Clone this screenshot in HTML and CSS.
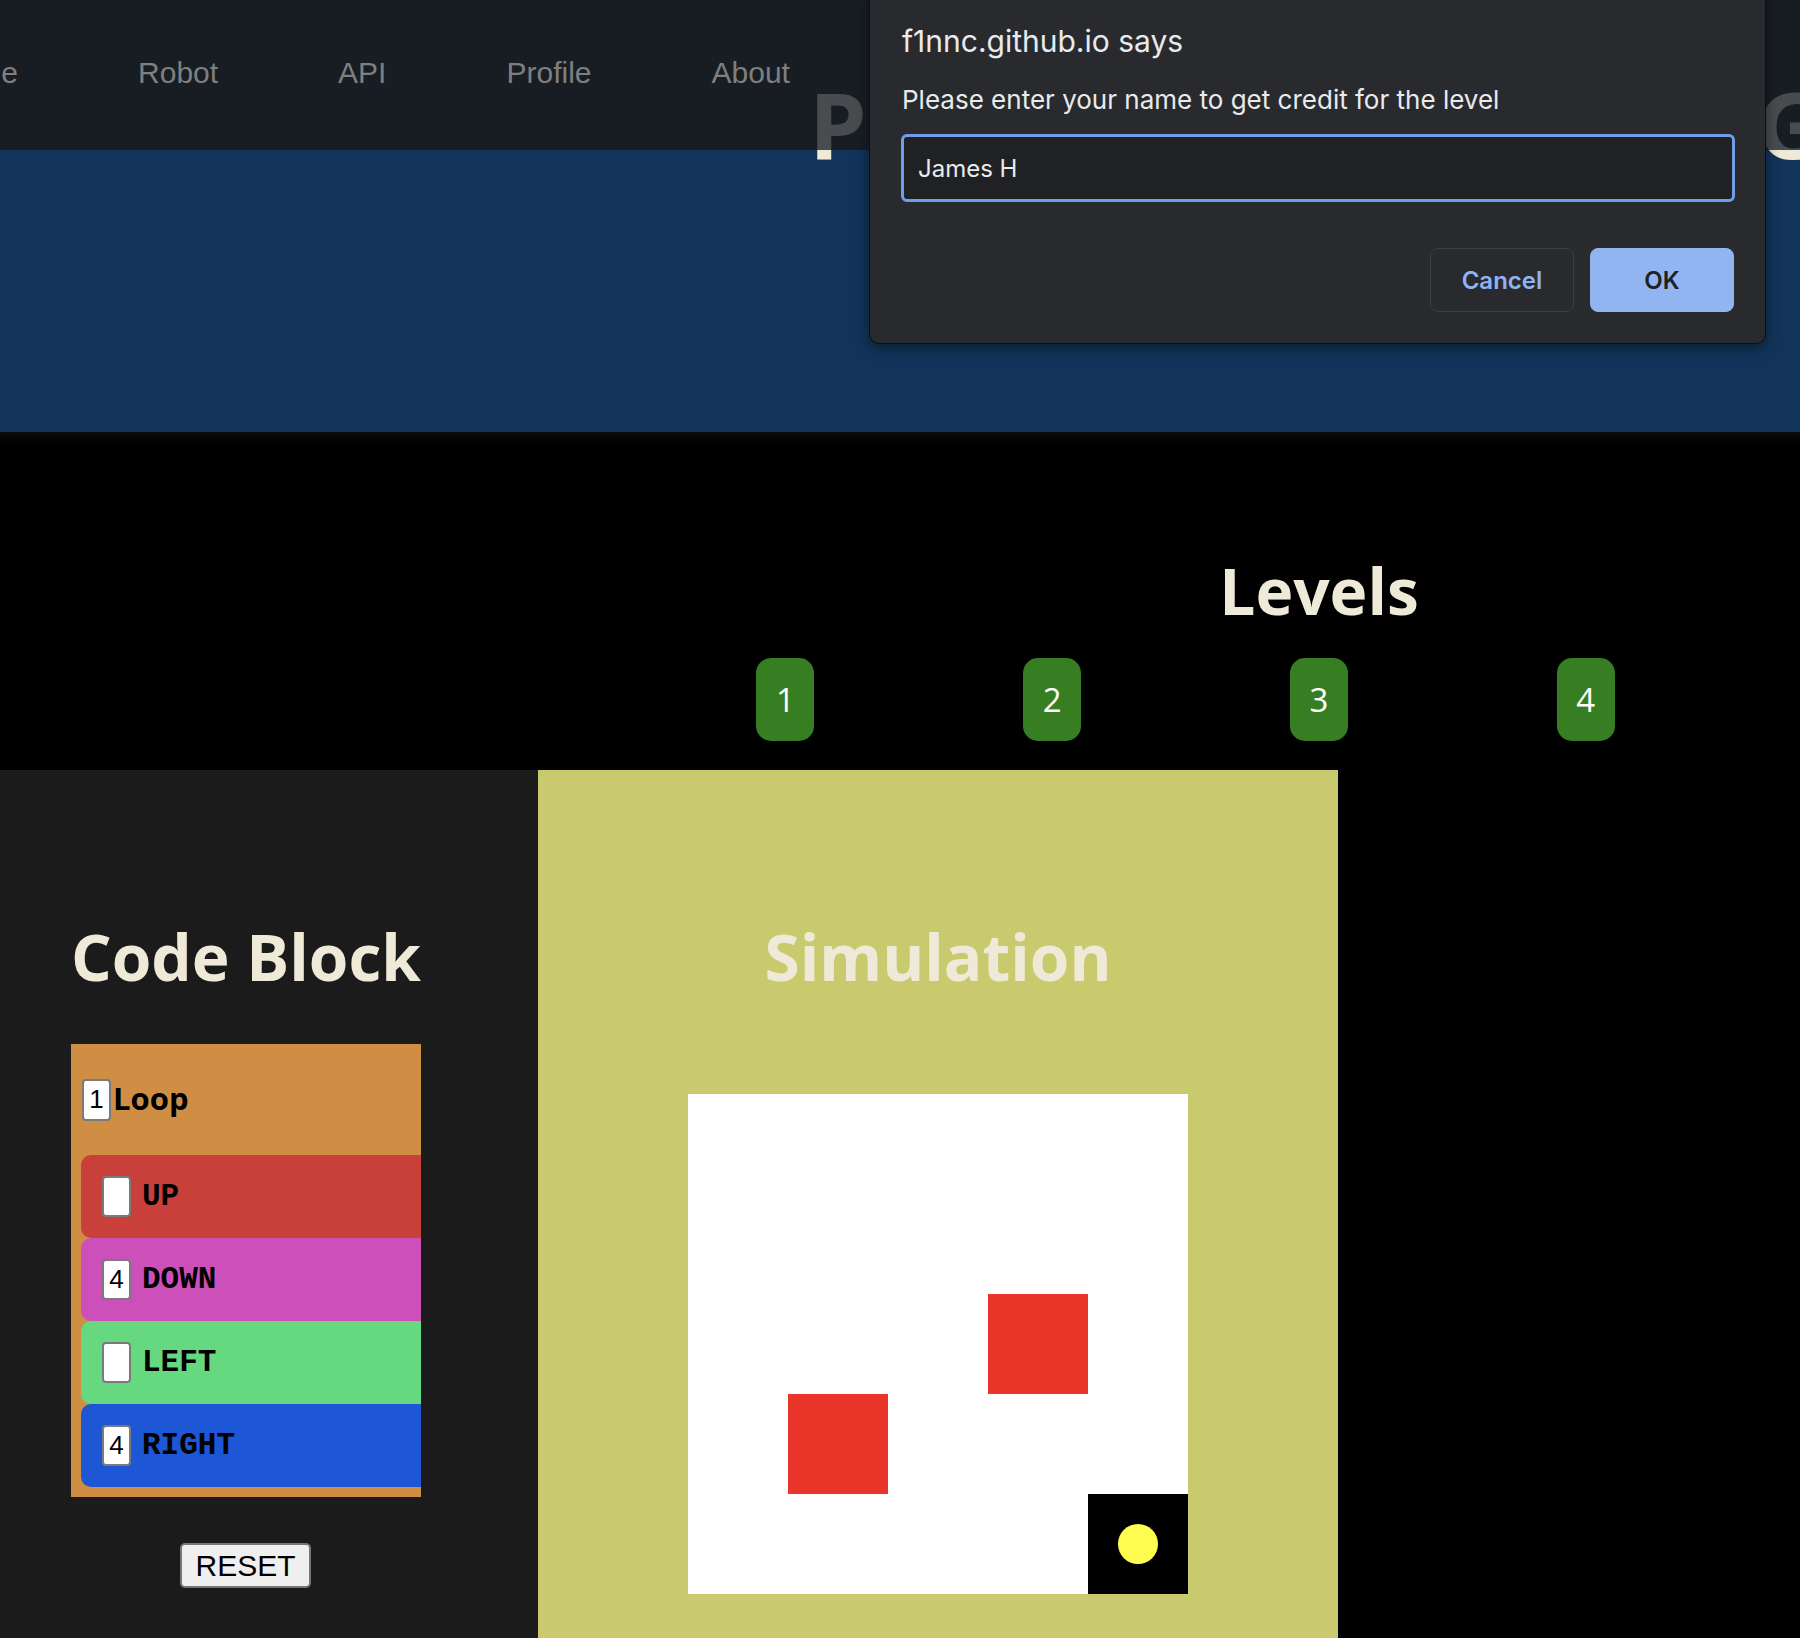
FILE: index.html
```html
<!DOCTYPE html>
<html lang="en">
<head>
<meta charset="utf-8">
<title>Programming Robot Game</title>
<link rel="stylesheet" href="styles.css">
</head>
<body>
<header class="site-header">
  <nav class="topnav">
    <ul class="nav-list">
      <li><a href="#">Home</a></li>
      <li><a href="#">Robot</a></li>
      <li><a href="#">API</a></li>
      <li><a href="#">Profile</a></li>
      <li><a href="#">About</a></li>
    </ul>
  </nav>
  <h1 class="site-title">Programming Robot Game</h1>
  <div class="hero"></div>
</header>

<section class="levels">
  <h2 class="levels-title">Levels</h2>
  <div class="level-grid">
    <button class="level-btn">1</button>
    <button class="level-btn">2</button>
    <button class="level-btn">3</button>
    <button class="level-btn">4</button>
  </div>
</section>

<main class="workspace">
  <section class="code-panel">
    <h2 class="panel-title">Code Block</h2>
    <div class="loop-block">
      <div class="loop-head">
        <input class="count-input" type="text" value="1">
        <span class="loop-label">Loop</span>
      </div>
      <div class="cmd cmd-up"><input class="count-input" type="text" value=""><span class="cmd-label">UP</span></div>
      <div class="cmd cmd-down"><input class="count-input" type="text" value="4"><span class="cmd-label">DOWN</span></div>
      <div class="cmd cmd-left"><input class="count-input" type="text" value=""><span class="cmd-label">LEFT</span></div>
      <div class="cmd cmd-right"><input class="count-input" type="text" value="4"><span class="cmd-label">RIGHT</span></div>
    </div>
    <button class="reset-btn">RESET</button>
  </section>

  <section class="sim-panel">
    <h2 class="panel-title">Simulation</h2>
    <div class="board">
      <div class="cell"></div><div class="cell"></div><div class="cell"></div><div class="cell"></div><div class="cell"></div>
      <div class="cell"></div><div class="cell"></div><div class="cell"></div><div class="cell"></div><div class="cell"></div>
      <div class="cell"></div><div class="cell"></div><div class="cell"></div><div class="cell wall"></div><div class="cell"></div>
      <div class="cell"></div><div class="cell wall"></div><div class="cell"></div><div class="cell"></div><div class="cell"></div>
      <div class="cell"></div><div class="cell"></div><div class="cell"></div><div class="cell"></div><div class="cell robot"><span class="bot"></span></div>
    </div>
  </section>

  <div class="filler"></div>
</main>

<div class="prompt-dialog" role="dialog">
  <div class="prompt-title">f1nnc.github.io says</div>
  <div class="prompt-msg">Please enter your name to get credit for the level</div>
  <input class="prompt-input" type="text" value="James H">
  <div class="prompt-actions">
    <button class="btn-cancel">Cancel</button>
    <button class="btn-ok">OK</button>
  </div>
</div>
</body>
</html>
```

FILE: styles.css
```css
* { box-sizing: border-box; }

html, body {
  margin: 0;
  padding: 0;
  background: #000;
  overflow: hidden;
}

body {
  width: 1800px;
  height: 1638px;
  position: relative;
  font-family: "Open Sans", sans-serif;
}

/* ---------- header ---------- */
.site-header {
  position: relative;
}

.topnav {
  position: relative;
  z-index: 2;
  height: 150px;
  background: rgba(30, 36, 45, 0.8);
  padding-top: 58px;
}

.nav-list {
  list-style: none;
  margin: 0 0 0 -62px;
  padding: 0;
  display: flex;
  gap: 120px;
}

.nav-list a {
  font-family: "Liberation Sans", Arial, sans-serif;
  font-size: 30px;
  line-height: 30px;
  color: #7f7f7f;
  text-decoration: none;
  white-space: nowrap;
}

.site-title {
  position: absolute;
  z-index: 1;
  top: 78px;
  left: 809px;
  margin: 0;
  font-family: "Open Sans", sans-serif;
  font-weight: 700;
  font-size: 92px;
  line-height: 92px;
  color: #efe9d8;
  white-space: nowrap;
}

.hero {
  position: relative;
  z-index: 0;
  height: 282px;
  background: #12345a;
}

/* ---------- levels ---------- */
.levels {
  height: 338px;
  padding-top: 115px;
  background: linear-gradient(#0c0c0c, #000 12px);
}

.levels-title {
  margin: 0;
  padding-left: 838px;
  text-align: center;
  font-size: 64px;
  font-weight: 700;
  line-height: normal;
  color: #efe9d8;
  white-space: nowrap;
}

.level-grid {
  margin: 24px 0 0 652px;
  width: 1067px;
  display: grid;
  grid-template-columns: repeat(4, 1fr);
  justify-items: center;
}

.level-btn {
  width: 58px;
  height: 83px;
  padding: 0;
  border: none;
  border-radius: 15px;
  background: #377e22;
  color: #fff;
  font-family: "Open Sans", sans-serif;
  font-size: 33px;
  line-height: 1;
}

/* ---------- workspace ---------- */
.workspace {
  display: flex;
  height: 868px;
}

.panel-title {
  margin: 0;
  font-size: 64px;
  font-weight: 700;
  line-height: normal;
  color: #efe9d8;
  text-align: center;
  white-space: nowrap;
}

.code-panel {
  width: 538px;
  background: #1c1b1c;
  padding: 143px 0 0 71px;
}

.code-panel .panel-title {
  width: 450px;
  margin-left: -50px;
}

.loop-block {
  width: 350px;
  margin-top: 44px;
  background: #d08e45;
  overflow: hidden;
  padding: 0 0 10px 10px;
}

.loop-head {
  height: 111px;
  display: flex;
  align-items: center;
  padding-left: 1px;
}

.count-input {
  width: 29px;
  height: 42px;
  padding: 0;
  border: 2px solid #7a7a7a;
  border-radius: 4px;
  background: #fff;
  font-family: "Liberation Sans", Arial, sans-serif;
  font-size: 26px;
  color: #000;
  text-align: center;
  flex: none;
}

.loop-label {
  margin: 0 0 4px 2px;
  font-family: "Open Sans", sans-serif;
  font-weight: 700;
  font-size: 31px;
  color: #000;
}

.cmd {
  width: 420px;
  height: 83px;
  display: flex;
  align-items: center;
  padding-left: 21px;
  border-radius: 10px 0 0 10px;
}

.cmd .count-input {
  height: 41px;
}

.cmd-label {
  margin-left: 11px;
  font-family: "Liberation Mono", "Courier New", monospace;
  font-weight: 700;
  font-size: 31px;
  color: #000;
}

.cmd-up { background: #c9403a; }
.cmd-down { background: #cd4fba; }
.cmd-left { background: #66d87f; }
.cmd-right { background: #1d57d6; }

.reset-btn {
  display: block;
  margin: 46px 0 0 109px;
  width: 131px;
  height: 45px;
  padding: 0;
  background: #efefef;
  border: 2px solid #767676;
  border-radius: 5px;
  font-family: "Liberation Sans", Arial, sans-serif;
  font-size: 30px;
  color: #000;
}

.sim-panel {
  width: 800px;
  background: #c9c96d;
  padding-top: 143px;
}

.board {
  width: 500px;
  height: 500px;
  margin: 94px auto 0;
  background: #fff;
  display: grid;
  grid-template-columns: repeat(5, 100px);
  grid-template-rows: repeat(5, 100px);
}

.cell.wall { background: #e9352a; }

.cell.robot {
  background: #000;
  display: flex;
  align-items: center;
  justify-content: center;
}

.bot {
  width: 40px;
  height: 40px;
  border-radius: 50%;
  background: #fefc4f;
}

.filler {
  flex: 1;
  background: #000;
}

/* ---------- prompt dialog ---------- */
.prompt-dialog {
  position: absolute;
  z-index: 10;
  left: 869px;
  top: -12px;
  width: 897px;
  background: #292a2d;
  border: 1px solid #0e0e10;
  border-radius: 10px;
  box-shadow: 0 4px 14px rgba(0, 0, 0, 0.45);
  padding: 35px 31px 31px 32px;
  font-family: Inter, "Noto Sans", sans-serif;
  color: #e8eaed;
}

.prompt-title {
  font-size: 30px;
  line-height: 34px;
}

.prompt-msg {
  margin-top: 27px;
  font-size: 26px;
  line-height: 29px;
}

.prompt-input {
  display: block;
  margin: 20px 0 0 -1px;
  width: 834px;
  height: 68px;
  padding: 0 0 0 14px;
  background: #202124;
  border: 3px solid #729ee9;
  border-radius: 6px;
  outline: none;
  font-family: Inter, "Noto Sans", sans-serif;
  font-size: 24px;
  color: #e8eaed;
}

.prompt-actions {
  margin-top: 46px;
  display: flex;
  justify-content: flex-end;
  gap: 16px;
}

.prompt-actions button {
  width: 144px;
  height: 64px;
  border-radius: 8px;
  font-family: Inter, "Noto Sans", sans-serif;
  font-weight: 600;
  font-size: 24px;
  padding: 0;
}

.btn-cancel {
  background: #292a2d;
  border: 1px solid #3d3e42;
  color: #8fb3f2;
}

.btn-ok {
  background: #92b5f2;
  border: 1px solid #92b5f2;
  color: #202124;
}
```
